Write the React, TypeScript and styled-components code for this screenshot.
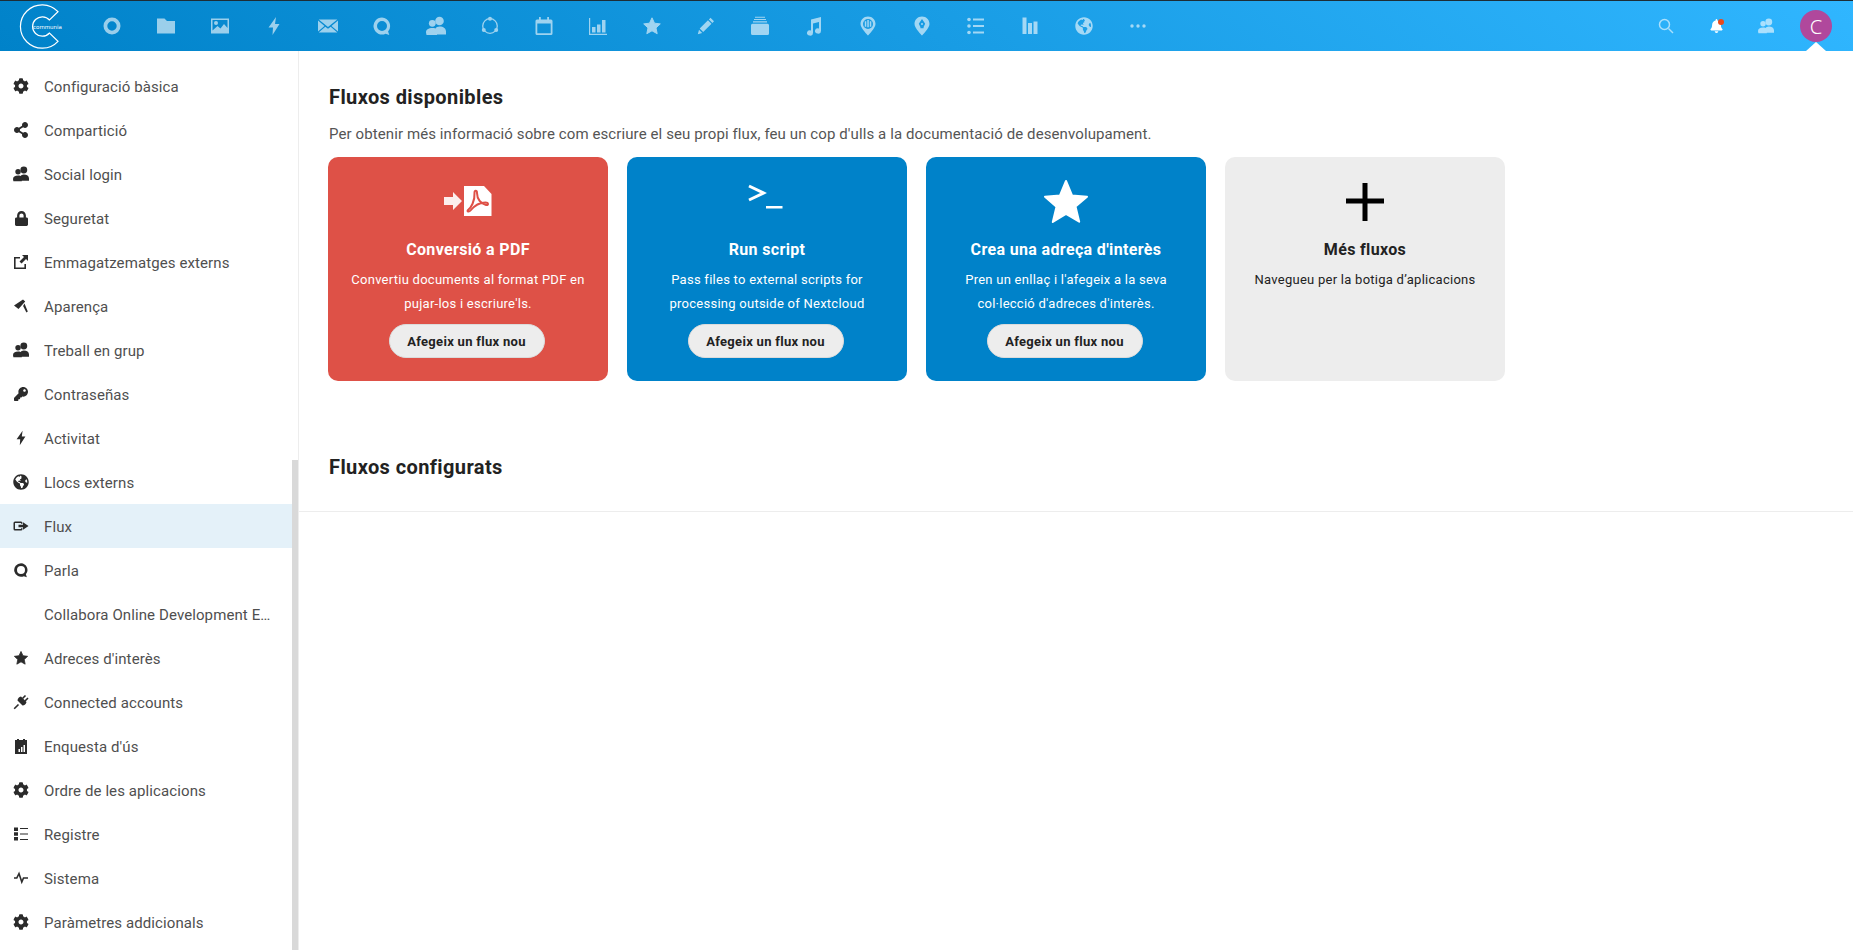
import React from 'react';
import styled, { createGlobalStyle } from 'styled-components';
import { FaCog, FaGlobeAmericas, FaKey, FaShareAlt, FaLock, FaBell } from 'react-icons/fa';

const FONT = `Roboto, "Noto Sans", "Liberation Sans", sans-serif`;

const Global = createGlobalStyle`
  html, body { margin: 0; padding: 0; height: 100%; background: #fff; overflow: hidden; }
  body { font-family: ${FONT}; color: #222; }
  * { box-sizing: border-box; }
`;

const Page = styled.div`
  display: flex;
  flex-direction: column;
  height: 100vh;
`;
const Header = styled.header`
  position: relative;
  flex: 0 0 51px;
  display: flex;
  align-items: center;
  border-top: 1px solid #1d2d36;
  background: linear-gradient(40deg, #0082c9 0%, #30b6ff 100%);
`;
const Logo = styled.svg`
  width: 85px;
  height: 50px;
  flex: none;
  color: #fff;
`;
const LogoText = styled.text`
  font-family: "DejaVu Sans", sans-serif;
  font-size: 5.5px;
  font-weight: 400;
  fill: #fff;
`;
const AppMenu = styled.nav`
  display: flex;
  flex: 1;
`;
const AppIcon = styled.div`
  width: 54px;
  height: 50px;
  display: flex;
  align-items: center;
  justify-content: center;
  color: #fff;
  opacity: 0.6;
  svg { width: 20px; height: 20px; fill: currentColor; }
`;
const SmallGlobe = styled(FaGlobeAmericas)`
  && { width: 18px; height: 18px; }
`;
const RightMenu = styled.div`
  display: flex;
  padding-right: 12px;
`;
const RightItem = styled.div<{ $dim?: boolean }>`
  position: relative;
  width: 50px;
  height: 50px;
  display: flex;
  align-items: center;
  justify-content: center;
  color: #fff;
  opacity: ${p => (p.$dim ? 0.6 : 1)};
  svg { width: 16px; height: 16px; fill: currentColor; }
`;
const SmallBell = styled(FaBell)`
  && { width: 13px; height: 14px; }
`;
const BellDot = styled.span`
  position: absolute;
  top: 18px;
  left: 27px;
  width: 6px;
  height: 6px;
  border-radius: 50%;
  background: #ea4a1c;
`;
const Avatar = styled.div`
  width: 32px;
  height: 32px;
  border-radius: 50%;
  background: #b0489c;
  color: #fff;
  font-size: 20px;
  font-weight: 300;
  display: flex;
  align-items: center;
  justify-content: center;
  font-family: "Noto Sans", sans-serif;
`;
const Caret = styled.span`
  position: absolute;
  bottom: 0;
  left: 15px;
  width: 0;
  height: 0;
  border-left: 10px solid transparent;
  border-right: 10px solid transparent;
  border-bottom: 9px solid #fff;
`;
const Body = styled.div`
  flex: 1;
  display: flex;
  min-height: 0;
`;
const Sidebar = styled.aside`
  position: relative;
  flex: 0 0 299px;
  border-right: 1px solid #ededed;
  padding: 13px 6px 0 0;
  overflow: hidden;
`;
const ScrollThumb = styled.div`
  position: absolute;
  top: 409px;
  bottom: 0;
  right: 0;
  width: 6px;
  background: #d9d9d9;
`;
const NavItem = styled.a<{ $active?: boolean }>`
  display: flex;
  align-items: center;
  height: 44px;
  font-size: 15px;
  letter-spacing: 0.1px;
  color: #4f4f4f;
  background: ${p => (p.$active ? '#e4f1f9' : 'transparent')};
`;
const NavIcon = styled.span`
  flex: 0 0 44px;
  display: flex;
  justify-content: center;
  padding-right: 2px;
  color: #2b2b2b;
  svg { width: 16px; height: 16px; fill: currentColor; }
`;
const SmallLock = styled(FaLock)`
  && { width: 13px; height: 15px; }
`;
const SmallKey = styled(FaKey)`
  && { width: 14px; height: 14px; }
`;
const NavLabel = styled.span`
  padding-top: 1px;
  white-space: nowrap;
`;
const Main = styled.main`
  flex: 1;
  min-width: 0;
`;
const Section = styled.section`
  padding: 30px 29px 0;
`;
const Title = styled.h2`
  margin: 0 0 0 1px;
  font-size: 20px;
  line-height: 32px;
  font-weight: 700;
  letter-spacing: 0.4px;
  color: #222;
`;
const Lead = styled.p`
  margin: 9px 0 0 1px;
  font-size: 15px;
  line-height: 24px;
  letter-spacing: 0.1px;
  color: #555;
`;
const Cards = styled.div`
  display: grid;
  grid-template-columns: repeat(4, 280px);
  column-gap: 19px;
  margin-top: 11px;
`;
const Card = styled.div<{ $tone: 'red' | 'blue' | 'grey' }>`
  height: 224px;
  border-radius: 10px;
  padding: 20px 16px 0;
  display: flex;
  flex-direction: column;
  align-items: center;
  text-align: center;
  color: ${p => (p.$tone === 'grey' ? '#222' : '#fff')};
  background: ${p => ({ red: '#de5147', blue: '#0082c9', grey: '#ededed' }[p.$tone])};
`;
const CardIcon = styled.svg`
  width: 50px;
  height: 50px;
  flex: none;
`;
const CardTitle = styled.h3`
  margin: 11px 0 6px;
  font-size: 16px;
  line-height: 24px;
  font-weight: 700;
  letter-spacing: 0.35px;
`;
const CardText = styled.p`
  margin: 0 -4px;
  font-size: 13px;
  line-height: 24px;
  letter-spacing: 0.26px;
`;
const AddButton = styled.button`
  margin: 8px 3px 0 0;
  height: 34px;
  width: 156px;
  border: 1px solid #dbdbdb;
  border-radius: 17px;
  background: #ededed;
  color: #222;
  font: 700 13px ${FONT};
  letter-spacing: 0.3px;
`;
const SecondTitle = styled(Title)`
  margin: 0;
  padding: 70px 28px 28px 30px;
  border-bottom: 1px solid #ededed;
`;

const Gear = () => <FaCog />;
const Bolt = () => (
  <svg viewBox="0 0 20 20"><path d="M12 1 4.500 11.500H9L8.500 19 15.500 8H11z" /></svg>
);
const Talk = () => (
  <svg viewBox="0 0 20 20">
    <path fillRule="evenodd" d="M10 1.500a8.500 8.500 0 1 0 3.600 16.200l3.700 1.300-1.200-3.600A8.500 8.500 0 0 0 10 1.500zm0 3.500a5 5 0 1 1 0 10 5 5 0 0 1 0-10z" />
  </svg>
);
const Contacts = () => (
  <svg viewBox="0 0 20 20">
    <circle cx="13.500" cy="5" r="4.300" />
    <circle cx="6.300" cy="7.300" r="3.400" />
    <path d="M0 16.500c0-3 2.300-4.500 6.500-4.500 1 0 2 .1 3 .4.600-.9 2-1.900 4-1.900 4 0 6.500 2 6.500 5v3h-9v.5H.5z" />
  </svg>
);
const Star = () => (
  <svg viewBox="0 0 20 20"><path stroke="currentColor" strokeWidth="1" strokeLinejoin="round" d="M10 1.800l2.500 5.400 5.800.7-4.300 4 1.200 5.800L10 14.800l-5.200 2.900L6 11.900l-4.300-4 5.800-.7z" /></svg>
);
const PinBars = () => (
  <svg viewBox="0 0 20 20">
    <path fillRule="evenodd" d="M10 .5C5.600.5 2.500 3.800 2.500 8c0 4 7.500 11.500 7.500 11.500S17.500 12 17.500 8C17.500 3.800 14.400.5 10 .5zM10 3a5 5 0 1 1 0 10 5 5 0 0 1 0-10z" />
    <path d="M6.800 5.200h1.500v5.500H6.800zM9.300 4h1.500v7.200H9.300zM11.800 5.200h1.500v5.500h-1.500z" />
  </svg>
);
const PinPen = () => (
  <svg viewBox="0 0 20 20">
    <path fillRule="evenodd" d="M10 .5C5.600.5 2.500 3.800 2.500 8c0 4 7.500 11.500 7.500 11.500S17.500 12 17.500 8C17.500 3.800 14.400.5 10 .5zM10 3l3.200 4.800L11.600 11v1.200H8.400V11L6.800 7.800z" />
    <circle cx="10" cy="8" r="1" />
  </svg>
);

const appIcons: React.ReactNode[] = [
  <svg viewBox="0 0 20 20"><circle cx="10" cy="10" r="6.600" stroke="currentColor" strokeWidth="3.800" style={{ fill: 'none' }} /></svg>,
  <svg viewBox="0 0 20 20"><path d="M1 2.500h7.500L11 5h8v12.500H1z" /></svg>,
  <svg viewBox="0 0 20 20"><path fillRule="evenodd" d="M1 2.500h18v15H1zM2.500 4v10.500l5-4.500 3 2.500L14 8l3.500 4V4zM6 5a2 2 0 1 1 0 4 2 2 0 0 1 0-4z" /></svg>,
  <Bolt />,
  <svg viewBox="0 0 20 20"><path d="M.7 3.500h18.600L10 11zM0 4.500 6.500 10 0 15.500zM20 4.500 13.500 10 20 15.500zM.7 16.500l6.600-5.800L10 12.800l2.700-2.100 6.600 5.800z" /></svg>,
  <Talk />,
  <Contacts />,
  <svg viewBox="0 0 20 20">
    <circle cx="10" cy="10" r="7.300" style={{ fill: 'none' }} stroke="currentColor" strokeWidth="1.300" />
    <circle cx="10" cy="2.800" r="2" /><circle cx="3.800" cy="14" r="2" /><circle cx="16.200" cy="14" r="2" />
  </svg>,
  <svg viewBox="0 0 20 20"><path fillRule="evenodd" d="M5 1h1.800v2.500h6.400V1H15v2.500h2A1.500 1.500 0 0 1 18.500 5v12.500A1.500 1.500 0 0 1 17 19H3a1.500 1.500 0 0 1-1.500-1.500V5A1.500 1.500 0 0 1 3 3.500h2zM3.300 7.500v9.700h13.400V7.500z" /></svg>,
  <svg viewBox="0 0 20 20"><path d="M1 2h1.200v15.700H19V19H1zM4 11h3.500v5.500H4zM9 8.500h3.500v8H9zM14 4h3.500v12.500H14z" /></svg>,
  <Star />,
  <svg viewBox="0 0 20 20"><path d="M14.500 1.800l3.500 3.500-1.600 1.600-3.500-3.500zM12 4.300l3.500 3.500-8.300 8.300-3.500-3.500zM3 13.700l3.200 3.200-4.400 1.300z" /></svg>,
  <svg viewBox="0 0 20 20"><path d="M5 .8h10v1H5zM4 2.900h12v1.200H4zM3 5.200h14v1.400H3zM2.500 7.800h15A1.500 1.500 0 0 1 19 9.300v8.200a1.500 1.500 0 0 1-1.500 1.500h-15A1.500 1.500 0 0 1 1 17.500V9.300a1.500 1.500 0 0 1 1.500-1.500z" /></svg>,
  <svg viewBox="0 0 20 20"><path d="M7 3.500 17 1v14h-.1a3 2.600 0 1 1-1.900-2.400V6L9 7.500V17h-.1a3 2.600 0 1 1-1.900-2.400z" /></svg>,
  <PinBars />,
  <PinPen />,
  <svg viewBox="0 0 20 20"><circle cx="3" cy="3.500" r="1.800" /><circle cx="3" cy="10" r="1.800" /><circle cx="3" cy="16.500" r="1.800" /><path d="M7 2.500h11v2H7zM7 9h11v2H7zM7 15.500h11v2H7z" /></svg>,
  <svg viewBox="0 0 20 20"><path d="M2.500 1.500h4V18h-4zM8 7h4v11H8zM13.500 5.500h4V18h-4z" /></svg>,
  <SmallGlobe />,
  <svg viewBox="0 0 20 20"><circle cx="4" cy="10" r="1.700" /><circle cx="10" cy="10" r="1.700" /><circle cx="16" cy="10" r="1.700" /></svg>,
];

const navItems: { label: string; icon?: React.ReactNode; active?: boolean }[] = [
  { label: 'Configuració bàsica', icon: <Gear /> },
  { label: 'Compartició', icon: <FaShareAlt /> },
  { label: 'Social login', icon: <Contacts /> },
  { label: 'Seguretat', icon: <SmallLock /> },
  { label: 'Emmagatzematges externs', icon: <svg viewBox="0 0 16 16"><path d="M1 3h6v1.600H2.600v8.800h8.800V10H13v5H1z" /><path d="M9 1h6v6l-2-2-4.500 4.500L6.500 7.500 11 3z" /></svg> },
  { label: 'Aparença', icon: <svg viewBox="0 0 16 16"><path d="M10 1.500l2.200 2-6.700 7.500L1 7.500zM11.500 5.500l3.300 8-1.400 1-3.300-6.500z" /></svg> },
  { label: 'Treball en grup', icon: <Contacts /> },
  { label: 'Contraseñas', icon: <SmallKey /> },
  { label: 'Activitat', icon: <Bolt /> },
  { label: 'Llocs externs', icon: <FaGlobeAmericas /> },
  { label: 'Flux', active: true, icon: <svg viewBox="0 0 16 16"><path fillRule="evenodd" d="M2 3.500h6A1.500 1.500 0 0 1 9.500 5v.7H8V5H2v6h6v-.7h1.500v.7A1.500 1.500 0 0 1 8 12.500H2A1.500 1.500 0 0 1 .5 11V5A1.500 1.500 0 0 1 2 3.500z" /><path d="M5.500 6.800h4.500V4.300L15.500 8 10 11.700V9.200H5.500z" /></svg> },
  { label: 'Parla', icon: <Talk /> },
  { label: 'Collabora Online Development E…', icon: <span /> },
  { label: "Adreces d'interès", icon: <Star /> },
  { label: 'Connected accounts', icon: <svg viewBox="0 0 16 16"><path d="M4.500 6.500l5 5q3.200-.2 4-3.500l-5.500-5.500q-3.300.8-3.500 4z" /><path d="M9.500 4.500 12.500 1.500M12 7l3-3M5.500 10.500 1.200 14.800" stroke="currentColor" strokeWidth="1.600" /></svg> },
  { label: "Enquesta d'ús", icon: <svg viewBox="0 0 16 16"><path fillRule="evenodd" d="M2 2h2V1h2v1h4V1h2v1h2v14H2zM8 9v5h1.500V9zM10.500 7v7H12V7zM5.500 11v3H7v-3z" /></svg> },
  { label: 'Ordre de les aplicacions', icon: <Gear /> },
  { label: 'Registre', icon: <svg viewBox="0 0 16 16"><path d="M1 1.500h4v3.500H1zM1 6.300h4v3.500H1zM1 11h4v3.500H1zM7 2h8v1H7zM7 7.500h8v1H7zM7 13h8v1H7z" /></svg> },
  { label: 'Sistema', icon: <svg viewBox="0 0 16 16"><path d="M1 8h2.800L6 3.500l2.800 8.500 1.700-4H15" style={{ fill: 'none' }} stroke="currentColor" strokeWidth="1.600" /></svg> },
  { label: 'Paràmetres addicionals', icon: <Gear /> },
];

const cards: { tone: 'red' | 'blue' | 'grey'; title: string; text: string; button?: boolean; icon: React.ReactNode }[] = [
  {
    tone: 'red',
    title: 'Conversió a PDF',
    text: "Convertiu documents al format PDF en pujar-los i escriure'ls.",
    button: true,
    icon: (
      <CardIcon viewBox="0 0 50 50">
        <g transform="translate(0 9)">
          <path fill="#fff" fillOpacity=".9" d="M1 11h9V6l9 9-9 9v-5H1z" />
          <path fill="#fff" d="M21 0h20l7.500 8v22H21z" />
          <path fill="none" stroke="#de5147" strokeWidth="2" d="M25 24c3-2 7-9 6.500-17-.2-3 2.500-3 2.500 0 0 6 4 11 9 12 3 .5 2.500-2.500-.5-2.500-6 0-11 3-15 8-1.500 1.800-4 1-2.500-.5z" />
        </g>
      </CardIcon>
    ),
  },
  {
    tone: 'blue',
    title: 'Run script',
    text: 'Pass files to external scripts for processing outside of Nextcloud',
    button: true,
    icon: (
      <CardIcon viewBox="0 0 50 50">
        <path fill="none" stroke="#fff" strokeWidth="3" d="M7 9l14.500 7L7 23" />
        <path fill="#fff" d="M24 29h16.500v2.500H24z" />
      </CardIcon>
    ),
  },
  {
    tone: 'blue',
    title: "Crea una adreça d'interès",
    text: "Pren un enllaç i l'afegeix a la seva col·lecció d'adreces d'interès.",
    button: true,
    icon: (
      <CardIcon viewBox="0 0 50 50">
        <path fill="#fff" stroke="#fff" strokeWidth="2" strokeLinejoin="round" d="M25 4l6 14.500 15 1.200-11.500 9.800 3.700 15.200L25 37l-13.200 8 3.700-15.200L4 19.700l15-1.200z" />
      </CardIcon>
    ),
  },
  {
    tone: 'grey',
    title: 'Més fluxos',
    text: 'Navegueu per la botiga d’aplicacions',
    icon: (
      <CardIcon viewBox="0 0 50 50">
        <path fill="#000" d="M22.500 6h5v15.500H44v5H27.500V44h-5V26.500H6v-5h16.500z" />
      </CardIcon>
    ),
  },
];

export default function App() {
  return (
    <Page>
      <Global />
      <Header>
        <Logo viewBox="0 0 85 50">
          <path fill="none" stroke="currentColor" strokeWidth="1.200" d="M58 10.700A21.700 21.700 0 1 0 58 40.300L49.500 32A9.700 9.700 0 1 1 49.500 19Z" />
          <LogoText x="33" y="27.500">communia</LogoText>
        </Logo>
        <AppMenu>
          {appIcons.map((icon, i) => <AppIcon key={i}>{icon}</AppIcon>)}
        </AppMenu>
        <RightMenu>
          <RightItem $dim>
            <svg viewBox="0 0 16 16"><circle cx="6.500" cy="6.500" r="5" style={{ fill: 'none' }} stroke="currentColor" strokeWidth="1.500" /><path d="M10 11l1-1 4.500 4.500-1 1z" /></svg>
          </RightItem>
          <RightItem><SmallBell /><BellDot /></RightItem>
          <RightItem $dim><Contacts /></RightItem>
          <RightItem>
            <Avatar>C</Avatar>
            <Caret />
          </RightItem>
        </RightMenu>
      </Header>
      <Body>
        <Sidebar>
          {navItems.map(item => (
            <NavItem key={item.label} $active={item.active}>
              <NavIcon>{item.icon}</NavIcon>
              <NavLabel>{item.label}</NavLabel>
            </NavItem>
          ))}
          <ScrollThumb />
        </Sidebar>
        <Main>
          <Section>
            <Title>Fluxos disponibles</Title>
            <Lead>Per obtenir més informació sobre com escriure el seu propi flux, feu un cop d'ulls a la documentació de desenvolupament.</Lead>
            <Cards>
              {cards.map(card => (
                <Card key={card.title} $tone={card.tone}>
                  {card.icon}
                  <CardTitle>{card.title}</CardTitle>
                  <CardText>{card.text}</CardText>
                  {card.button && <AddButton>Afegeix un flux nou</AddButton>}
                </Card>
              ))}
            </Cards>
          </Section>
          <SecondTitle>Fluxos configurats</SecondTitle>
        </Main>
      </Body>
    </Page>
  );
}
